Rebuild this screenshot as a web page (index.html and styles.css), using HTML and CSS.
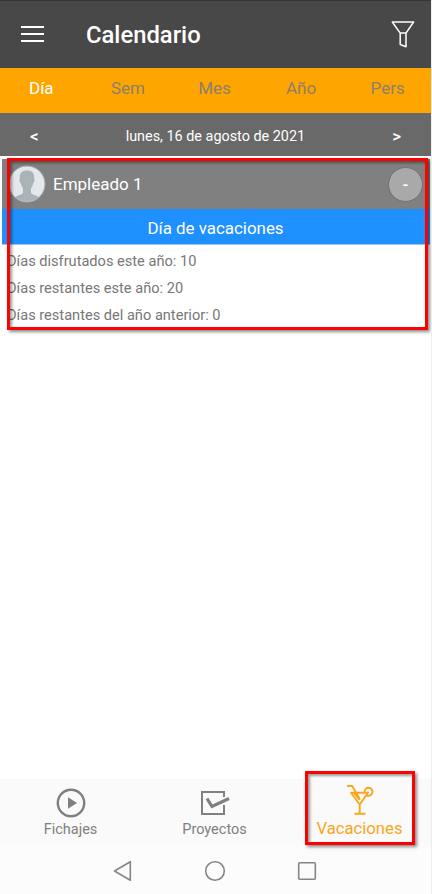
FILE: index.html
```html
<!DOCTYPE html>
<html lang="es">
<head>
<meta charset="utf-8">
<title>Calendario</title>
<link rel="stylesheet" href="styles.css">
</head>
<body>
<div class="app">
  <header class="header">
    <svg class="menu" width="24" height="18" viewBox="0 0 24 18"><path d="M0 2h23M0 9h23M0 16h23" stroke="#fff" stroke-width="2.200"/></svg>
    <h1 class="title">Calendario</h1>
    <svg class="filter" width="24" height="28" viewBox="0 0 24 28" fill="none" stroke="#fff" stroke-width="1.5" stroke-linejoin="round"><path d="M1.300 2H22.600L15 13.100V26.700L9.200 24.500V13.100ZM9.200 13.100h5.800"/></svg>
  </header>
  <nav class="tabs">
    <span class="tab active">Día</span><span class="tab">Sem</span><span class="tab">Mes</span><span class="tab">Año</span><span class="tab">Pers</span>
  </nav>
  <div class="datebar"><span class="arrow">&lt;</span><span class="date">lunes, 16 de agosto de 2021</span><span class="arrow">&gt;</span></div>
  <main class="content">
    <section class="employee">
      <div class="person">
        <svg class="avatar" width="38" height="38" viewBox="0 0 38 38">
          <defs><clipPath id="face"><circle cx="19" cy="19" r="17.6"/></clipPath></defs>
          <circle cx="19" cy="19" r="18" fill="#e4e7ec" stroke="#a4aaac" stroke-width="1"/>
          <path clip-path="url(#face)" fill="#aab4b8" d="M19 5.500c-5.500 0-7.500 3-7.200 8-.8 1-.4 4 1 4.500.4 2.500 1.200 4 2.200 5.500v4.500c-2 2.500-7 2.500-10 5.500V38h28v-4.500c-3-3-8-3-10-5.500v-4.500c1-1.500 1.800-3 2.200-5.500 1.400-.5 1.800-3.500 1-4.500.3-5-1.700-8-7.200-8Z"/>
        </svg>
        <span class="name">Empleado 1</span>
        <span class="toggle">-</span>
      </div>
      <div class="holiday">Día de vacaciones</div>
      <div class="details"><p>Días disfrutados este año: 10</p><p>Días restantes este año: 20</p><p>Días restantes del año anterior: 0</p></div>
    </section>
  </main>
  <footer class="bottom">
    <div class="item">
      <svg width="30" height="30" viewBox="0 0 30 30"><circle cx="15" cy="15" r="13.2" fill="none" stroke="#808080" stroke-width="2.4"/><path d="M12 9.300v11.400l9-5.700Z" fill="#808080"/></svg>
      <span>Fichajes</span>
    </div>
    <div class="item">
      <svg width="30" height="30" viewBox="0 0 30 30" fill="none" stroke="#808080"><path d="M24 9V4H2V26H24V17" stroke-width="2"/><path d="M7 10.500l5 8L29 10.500" stroke-width="3.200"/></svg>
      <span>Proyectos</span>
    </div>
    <div class="item selected">
      <svg width="30" height="30" viewBox="0 0 30 30" fill="none" stroke="#faa61a" stroke-width="1.900" stroke-linejoin="round"><path d="M2 1h5.200L15 14.500M6 7.700H23L14.700 19.500ZM14.700 19v9.200M9.500 28.700H20.500M9.500 8.500l5.200 6.500"/><path d="M19.500 7a4 4 0 1 1 2.200 3.300"/></svg>
      <span>Vacaciones</span>
    </div>
  </footer>
  <div class="system">
    <svg width="20" height="22" viewBox="0 0 20 22"><path d="M17.300 1.700V20.300L1.500 11Z"/></svg>
    <svg width="22" height="22" viewBox="0 0 22 22"><circle cx="11" cy="11" r="9.300"/></svg>
    <svg width="20" height="20" viewBox="0 0 20 20"><rect x="1.700" y="1.700" width="16.600" height="16.600" rx="1"/></svg>
  </div>
  <div class="mark mark-details"></div>
  <div class="mark mark-vacation"></div>
</div>
</body>
</html>
```

FILE: styles.css
```css
* { box-sizing: border-box; }
body { margin: 0; font-family: Roboto, sans-serif; background: #fff; }
svg { display: block; flex: none; }
.app { position: relative; width: 432px; height: 894px; display: flex; flex-direction: column; overflow: hidden; border-right: 1px solid #ededed; }
.header, .tabs, .datebar { margin-right: -1px; flex: none; }
.header { height: 68px; background: #484848; border-top: 1px solid #363636; display: flex; align-items: center; padding: 0 17px 2px 21px; }
.menu { margin-right: 41px; }
.title { margin: 3px auto 0 0; color: #fff; font-size: 23.800px; line-height: 28px; font-weight: 500; }
.tabs { height: 45px; background: #ffa500; display: grid; grid-template-columns: repeat(5, 86.600px); margin-left: -2px; }
.tab { text-align: center; font-size: 17px; line-height: 41px; color: #8c806c; }
.tab.active { color: #fff; }
.datebar { height: 43px; background: #696969; display: flex; justify-content: space-between; align-items: center; padding: 3px 31px 0 30px; color: #fff; font-size: 14.400px; }
.arrow { font-weight: 500; font-size: 17px; }
.content { flex: 1; padding: 3px 1px 0 2px; }
.person { height: 50px; background: #808080; display: flex; align-items: center; padding: 0 7px 0 6px; }
.name { margin: 0 auto 0 7px; color: #fff; font-size: 17px; }
.toggle { width: 35px; height: 35px; border: 1px solid #707070; border-radius: 50%; background: #a9a9a9; color: #fff; font-size: 16px; font-weight: 500; line-height: 34px; text-align: center; }
.holiday { height: 36px; background: #1e90ff; border-bottom: 1px solid #8fc5f8; color: #fff; font-size: 16.900px; line-height: 38px; text-align: center; padding-right: 1px; }
.details { padding: 3px 0 0 5px; color: #777; font-size: 14.600px; }
.details p { margin: 0; line-height: 27px; }
.bottom { height: 67px; flex: none; background: #fafafa; display: flex; margin: 0 0 0 -1px; }
.item { flex: 1; display: flex; flex-direction: column; align-items: center; padding-top: 9px; color: #808080; font-size: 14.500px; }
.item + .item { padding-left: 1px; }
.item span { line-height: 20px; margin-top: 2px; }
.item.selected { color: #faa61a; font-size: 16.700px; padding: 6px 0 0 2px; }
.selected span { margin-top: 4px; }
.system { height: 48px; flex: none; background: #fcfcfc; display: flex; align-items: center; justify-content: space-between; padding: 2px 114px 0 113px; fill: none; stroke: #858585; stroke-width: 1.600; stroke-linejoin: round; }
.mark { position: absolute; border: 3px solid #f00; box-shadow: 2px 2px 3px rgba(0,0,0,.45), inset 2px 2px 3px rgba(0,0,0,.4); }
.mark-details { left: 7px; top: 158px; width: 421px; height: 172px; }
.mark-vacation { left: 305px; top: 771px; width: 110px; height: 74px; }
```
